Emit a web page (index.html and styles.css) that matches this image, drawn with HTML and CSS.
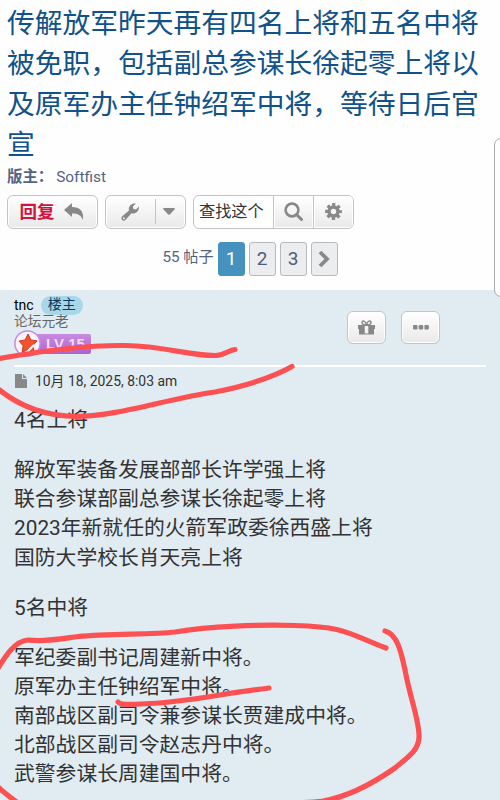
FILE: index.html
```html
<!DOCTYPE html>
<html lang="zh-CN">
<head>
  <meta charset="UTF-8">
  <meta name="viewport" content="width=device-width, initial-scale=1.0">
  <title>传解放军昨天再有四名上将和五名中将被免职</title>
  <link rel="stylesheet" href="styles.css">
</head>
<body>
  <header class="topic">
    <h1 class="topic-title">传解放军昨天再有四名上将和五名中将被免职，包括副总参谋长徐起零上将以及原军办主任钟绍军中将，等待日后官宣</h1>
    <p class="moderator"><strong>版主：</strong> <span>Softfist</span></p>

    <div class="action-bar">
      <a class="button reply">回复
        <svg width="20" height="18" viewBox="0 0 20 18"><path d="M0 7 8 0V4C16 4 20 8 19 17C17 12 14 10.500 8 10.500V14Z"/></svg>
      </a>
      <div class="button tools">
        <span class="tool-main"><svg width="18" height="18" viewBox="0 0 18 18"><path fill-rule="evenodd" d="M1 13.500 8 7.500C7 3 10.500-.3 15 .5L11.800 3.500 12.500 6 15 6.500 17.800 3.500C18.500 8 14.500 11.500 10.500 10.300L4.500 17C2 19-.8 16 1 13.500ZM2.800 14.200a1 1 0 1 0 .1 2 1 1 0 0 0-.1-2Z"/></svg></span>
        <span class="tool-caret"><svg width="12" height="7" viewBox="0 0 12 7"><path d="M1 0H11Q12.500 0 11.500 1.500L7 6.300Q6 7.400 5 6.300L.5 1.500Q-.5 0 1 0Z"/></svg></span>
      </div>
      <div class="search-box">
        <span class="search-input">查找这个</span>
        <span class="search-button"><svg width="19" height="19" viewBox="0 0 19 19"><circle cx="8" cy="8" r="6.400" fill="none" stroke="#888" stroke-width="2.600"/><path d="m12.500 12.500 5 5" fill="none" stroke="#888" stroke-width="3" stroke-linecap="round"/></svg></span>
        <span class="search-button"><svg width="17" height="17" viewBox="-8.500 -8.500 17 17"><circle r="4.500" fill="none" stroke="#888" stroke-width="3.600"/><circle r="7" fill="none" stroke="#888" stroke-width="2.800" stroke-dasharray="3.200 2.298" stroke-dashoffset="1.600"/></svg></span>
      </div>
    </div>

    <div class="pagination">
      <span class="total">55 帖子</span>
      <a class="page active">1</a>
      <a class="page">2</a>
      <a class="page">3</a>
      <a class="page"><svg width="12" height="18" viewBox="0 0 12 18"><path d="m2 2 7 7-7 7" fill="none" stroke="#888" stroke-width="3.800"/></svg></a>
    </div>
    <div class="side-panel"></div>
  </header>

  <article class="post">
    <div class="profile">
      <div class="author">
        <div class="author-name">tnc <span class="badge">楼主</span></div>
        <div class="rank">论坛元老</div>
        <div class="level">
          <svg class="level-star" width="27" height="27" viewBox="0 0 27 27">
            <circle cx="13.500" cy="13.500" r="12.600" fill="#fbf3fb" stroke="#c78bda" stroke-width="1.500"/>
            <path d="m14 4 2.900 5.900 6.200 1-4.300 4.700 1.200 6.500-5.800-2.900-6 3.200.9-6.700L5 11.100l6.200-1.200Z" fill="#f0532f" stroke="#c83a22"/>
            <path d="m14 21 6-6" stroke="#fff" stroke-width="2"/>
          </svg>
          <span class="level-text">LV 15</span>
        </div>
      </div>
      <div class="post-buttons">
        <a class="button"><svg width="17" height="15" viewBox="0 0 17 15"><path fill-rule="evenodd" d="M0 5h17v4h-1v5.500H1V9H0ZM6.700 6v7.500h3.600V6Z"/><path d="M8.500 5C6 5 3.800 4.200 4 2.300 4.300.3 7.500.2 8.500 5 9.500.2 12.700.3 13 2.300 13.200 4.200 11 5 8.500 5Z" fill="none" stroke="#888" stroke-width="1.500"/></svg></a>
        <a class="button"><svg width="16" height="5" viewBox="0 0 16 5"><rect width="4.500" height="4.500" rx="1"/><rect x="5.700" width="4.500" height="4.500" rx="1"/><rect x="11.400" width="4.500" height="4.500" rx="1"/></svg></a>
      </div>
    </div>

    <p class="post-date">
      <svg width="12" height="14" viewBox="0 0 12 14"><path d="M0 0H7V5H12V14H0ZM8 0 12 4H8Z"/></svg>
      10月 18, 2025, 8:03 am
    </p>

    <div class="content">
      <p>4名上将</p>
      <p>解放军装备发展部部长许学强上将<br>
      联合参谋部副总参谋长徐起零上将<br>
      2023年新就任的火箭军政委徐西盛上将<br>
      国防大学校长肖天亮上将</p>
      <p>5名中将</p>
      <p>军纪委副书记周建新中将。<br>
      原军办主任钟绍军中将。<br>
      南部战区副司令兼参谋长贾建成中将。<br>
      北部战区副司令赵志丹中将。<br>
      武警参谋长周建国中将。</p>
    </div>
  </article>

  <!-- red pen marks over the post -->
  <svg class="marks" width="500" height="800" viewBox="0 0 500 800">
    <path d="M-3 359C35 352 80 345 125 345.500C165 346 190 356 216 355.500C225 355 229 350 235 349.500"/>
    <path d="M-3 388C22 409 48 416 76 416.500C120 416 165 399 215 392C245 386 270 379 292 366.500"/>
    <path d="M-3 670C6 655 15 641 28 640C45 642 60 639 78 636.500C110 633 150 635 175 632C210 626 260 624.500 295 625.500C345 627 345 632 386 648"/>
    <path d="M385 631C397 634 401 651 405 670C411 702 420 722 419 738C418 751 408 757 395 768C372 784 347 797 323 801C300 804 270 803 250 803"/>
    <path d="M118 702C121 706 135 704 150 703.500C185 702 220 694 269 688"/>
    <path d="M-3 786C4 793 10 797 18 803"/>
  </svg>
</body>
</html>
```
FILE: styles.css
```css
* {
  box-sizing: border-box;
}

body {
  margin: 0;
  width: 500px;
  height: 800px;
  overflow: hidden;
  position: relative;
  background: #fefefe;
  font-family: Roboto, "Noto Sans CJK SC", sans-serif;
  color: #333;
}

svg {
  display: block;
  fill: #888;
}

.topic {
  height: 290px;
  padding: 4px 0 0 7px;
  position: relative;
}

.topic-title {
  margin: 0;
  width: 480px;
  font-size: 27.75px;
  font-weight: 400;
  line-height: 40.4px;
  color: #105289;
}

.moderator {
  display: flex;
  gap: 3px;
  margin: 0 0 7px;
  font-size: 15.4px;
  line-height: 22px;
  color: #536482;
}

.action-bar {
  display: flex;
  gap: 7px;
}

.button {
  display: flex;
  align-items: center;
  justify-content: center;
  height: 34px;
  border: 1px solid #c7c3bf;
  border-radius: 6px;
  background: linear-gradient(#fff, #e9e9e9);
  box-shadow: inset 0 0 0 1px #fff;
}

.reply {
  width: 91px;
  gap: 9px;
  padding-right: 2px;
  font-size: 17.5px;
  font-weight: 600;
  line-height: 30px;
  color: #d31141;
}

.tools {
  width: 81px;
}

.tool-main {
  display: flex;
  align-items: center;
  justify-content: center;
  flex: 1;
  padding-right: 2px;
}

.tool-caret {
  display: flex;
  align-items: center;
  justify-content: center;
  width: 30px;
  height: 25px;
  padding-right: 3px;
  border-left: 1px solid #c7c3bf;
}

.search-box {
  display: flex;
  width: 161px;
  height: 34px;
  border: 1px solid #c7c3bf;
  border-radius: 6px;
  overflow: hidden;
  background: #fff;
}

.search-input {
  width: 79px;
  padding-left: 5px;
  font-size: 16.2px;
  line-height: 31px;
  white-space: nowrap;
}

.search-button {
  display: flex;
  align-items: center;
  justify-content: center;
  width: 40px;
  border-left: 1px solid #c7c3bf;
  background: linear-gradient(#fff, #e9e9e9);
  box-shadow: inset 0 0 0 1px #fff;
}

.pagination {
  display: flex;
  gap: 4px;
  margin: 13px 0 0 155.5px;
}

.total {
  width: 51px;
  font-size: 15.2px;
  line-height: 31px;
  white-space: nowrap;
  color: #536482;
}

.page {
  display: flex;
  align-items: center;
  justify-content: center;
  width: 27px;
  height: 34px;
  border: 1px solid #b4bac0;
  border-radius: 3px;
  background: #ecedee;
  font-size: 19px;
  color: #4c5d77;
}

.page.active {
  border-color: #4692bf;
  background: #4692bf;
  color: #fff;
}

.side-panel {
  position: absolute;
  z-index: 1;
  left: 494px;
  top: 138px;
  width: 20px;
  height: 159px;
  border: 1px solid #aaa;
  border-radius: 7px;
  background: #fefefe;
}

.post {
  height: 510px;
  padding: 5px 14px 0;
  background: #e1ebf2;
}

.profile {
  display: flex;
  height: 72px;
  border-bottom: 2px solid #fff;
}

.author {
  width: 333px;
}

.author-name {
  display: flex;
  align-items: center;
  gap: 7px;
  height: 20px;
  font-size: 14px;
  color: #000;
}

.badge {
  width: 42px;
  height: 19px;
  border-radius: 10px;
  background: #a8d8e7;
  font-size: 14px;
  line-height: 17px;
  text-align: center;
  color: #0b3a63;
}

.rank {
  font-size: 13.7px;
  line-height: 13px;
  color: #666;
}

.level {
  display: flex;
  align-items: center;
  height: 27px;
  margin-top: 2px;
}

.level-star {
  position: relative;
}

.level-text {
  width: 64px;
  height: 20px;
  margin-left: -14px;
  padding-left: 19px;
  border-radius: 2px;
  background: linear-gradient(#c78be0, #ae62d0);
  font-family: "Liberation Sans", sans-serif;
  font-size: 15px;
  font-weight: bold;
  line-height: 20px;
  white-space: nowrap;
  color: #f3def8;
}

.post-buttons {
  display: flex;
  gap: 15px;
  padding-top: 16px;
}

.post-buttons .button {
  width: 39px;
  height: 33px;
}

.post-date {
  display: flex;
  align-items: center;
  gap: 8px;
  height: 28px;
  margin: 0 0 11px 1px;
  font-size: 13.9px;
  line-height: 26px;
}

.content {
  font-size: 20.8px;
  line-height: 29.2px;
}

.content p {
  margin: 0 0 20.8px;
  white-space: nowrap;
}

.marks {
  position: absolute;
  z-index: 2;
  left: 0;
  top: 0;
}

.marks path {
  fill: none;
  stroke: #fd5053;
  stroke-width: 5.2;
  stroke-linecap: round;
  stroke-linejoin: round;
}
```
